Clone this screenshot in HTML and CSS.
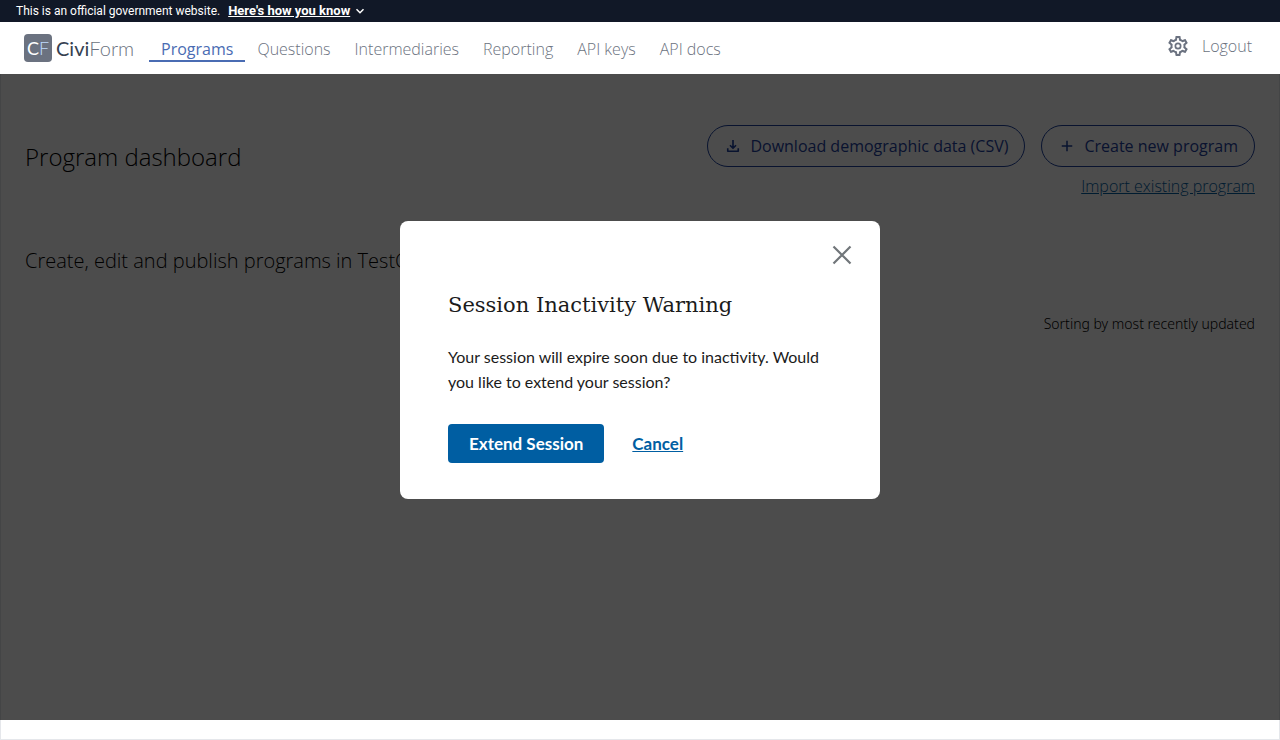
FILE: index.html
```html
<!DOCTYPE html>
<html lang="en">
<head>
<meta charset="utf-8">
<meta name="viewport" content="width=device-width, initial-scale=1">
<title>Program dashboard</title>
<link rel="stylesheet" href="styles.css">
</head>
<body>
<div class="gov-banner">
  <span>This is an official government website.</span>
  <button type="button" class="gov-toggle"><span class="gov-toggle-text">Here's how you know</span><svg class="chevron" viewBox="0 0 10 10" aria-hidden="true"><path d="M1.500 3.200 5 6.700 8.500 3.200" fill="none" stroke="currentColor" stroke-width="1.500"/></svg></button>
</div>
<header class="header">
  <a class="brand" href="#"><span class="brand-mark">C<span class="brand-mark-f">F</span></span><span class="brand-name">Civi<span class="brand-thin">Form</span></span></a>
  <nav class="nav">
    <a class="nav-link nav-link-active" href="#">Programs</a>
    <a class="nav-link" href="#">Questions</a>
    <a class="nav-link" href="#">Intermediaries</a>
    <a class="nav-link" href="#">Reporting</a>
    <a class="nav-link" href="#">API keys</a>
    <a class="nav-link" href="#">API docs</a>
  </nav>
  <div class="account">
    <a class="settings" href="#" aria-label="Settings"><svg class="gear" viewBox="0 0 24 24" aria-hidden="true"><path fill="currentColor" d="M19.43 12.98c.04-.32.07-.64.07-.98s-.03-.66-.07-.98l2.11-1.65c.19-.15.24-.42.12-.64l-2-3.46c-.09-.16-.26-.25-.44-.25-.06 0-.12.01-.17.03l-2.49 1c-.52-.4-1.08-.73-1.69-.98l-.38-2.65C14.46 2.18 14.25 2 14 2h-4c-.25 0-.46.18-.49.42l-.38 2.65c-.61.25-1.17.59-1.69.98l-2.49-1c-.06-.02-.12-.03-.18-.03-.17 0-.34.09-.43.25l-2 3.46c-.13.22-.07.49.12.64l2.11 1.65c-.04.32-.07.65-.07.98s.03.66.07.98l-2.11 1.65c-.19.15-.24.42-.12.64l2 3.46c.09.16.26.25.44.25.06 0 .12-.01.17-.03l2.49-1c.52.4 1.08.73 1.69.98l.38 2.65c.03.24.24.42.49.42h4c.25 0 .46-.18.49-.42l.38-2.65c.61-.25 1.17-.59 1.69-.98l2.49 1c.06.02.12.03.18.03.17 0 .34-.09.43-.25l2-3.46c.12-.22.07-.49-.12-.64l-2.11-1.65zm-1.98-1.71c.04.31.05.52.05.73 0 .21-.02.43-.05.73l-.14 1.13.89.7 1.08.84-.7 1.21-1.27-.51-1.04-.42-.9.68c-.43.32-.84.56-1.25.73l-1.06.43-.16 1.13-.2 1.35h-1.4l-.19-1.35-.16-1.13-1.06-.43c-.43-.18-.83-.41-1.23-.71l-.91-.7-1.06.43-1.27.51-.7-1.21 1.08-.84.89-.7-.14-1.13c-.03-.31-.05-.54-.05-.74s.02-.43.05-.73l.14-1.13-.89-.7-1.08-.84.7-1.21 1.27.51 1.04.42.9-.68c.43-.32.84-.56 1.25-.73l1.06-.43.16-1.13.2-1.35h1.39l.19 1.35.16 1.13 1.06.43c.43.18.83.41 1.23.71l.91.7 1.06-.43 1.27-.51.7 1.21-1.07.85-.89.7.14 1.13zM12 8.500a3.500 3.500 0 1 0 0 7 3.500 3.500 0 0 0 0-7zm0 5.300a1.800 1.800 0 1 1 0-3.600 1.800 1.800 0 0 1 0 3.600z"/></svg></a>
    <a class="logout" href="#">Logout</a>
  </div>
</header>
<main class="main">
  <div class="title-row">
    <h1 class="title">Program dashboard</h1>
    <div class="actions">
      <div class="action-buttons">
        <button type="button" class="pill"><svg class="pill-icon" viewBox="0 0 24 24" aria-hidden="true"><path fill="none" stroke="currentColor" stroke-width="2.200" d="M12 4v11M8 11l4 4 4-4M5 15v4h14v-4" stroke-linejoin="round"/></svg>Download demographic data (CSV)</button>
        <button type="button" class="pill"><svg class="pill-icon" viewBox="0 0 24 24" aria-hidden="true"><path fill="none" stroke="currentColor" stroke-width="2" d="M12 5v14M5 12h14"/></svg>Create new program</button>
      </div>
      <a class="import-link" href="#">Import existing program</a>
    </div>
  </div>
  <h2 class="subtitle">Create, edit and publish programs in TestCity</h2>
  <p class="sorting">Sorting by most recently updated</p>
</main>
<div class="overlay">
  <section class="modal" role="dialog" aria-modal="true" aria-labelledby="modal-title">
    <button type="button" class="close" aria-label="Close"><svg class="close-icon" viewBox="0 0 32 32" aria-hidden="true"><path fill="none" stroke="currentColor" stroke-width="2.200" d="M7.500 7.500l17 17M24.500 7.500l-17 17"/></svg></button>
    <div class="modal-content">
      <h2 class="modal-title" id="modal-title">Session Inactivity Warning</h2>
      <p class="modal-text">Your session will expire soon due to inactivity. Would you like to extend your session?</p>
      <div class="modal-actions">
        <button type="button" class="extend">Extend Session</button>
        <button type="button" class="cancel">Cancel</button>
      </div>
    </div>
  </section>
</div>
</body>
</html>
```

FILE: styles.css
```css
* { box-sizing: border-box; }

body {
  position: relative;
  display: flex;
  flex-direction: column;
  min-height: 100vh;
  margin: 0;
  background: #fff;
  color: #000;
  font-family: "Open Sans", "Noto Sans", sans-serif;
  font-size: 16px;
  font-weight: 300;
  line-height: 24px;
}

h1, h2, p { margin: 0; font-weight: inherit; }
a { color: inherit; text-decoration: none; }
button { border: 0; background: none; padding: 0; font: inherit; color: inherit; cursor: pointer; }
svg { display: block; flex: none; }

.gov-banner {
  position: relative;
  z-index: 2;
  display: flex;
  align-items: center;
  gap: 8px;
  padding: 3px 16px;
  background: #111827;
  color: #fff;
  font-family: Roboto, sans-serif;
  font-size: 12px;
  font-weight: 400;
  line-height: 16px;
}
.gov-toggle { display: flex; align-items: center; gap: 5px; font-size: 13px; font-weight: 700; line-height: 16px; }
.gov-toggle-text { text-decoration: underline; }
.chevron { width: 10px; height: 10px; }

.header {
  position: relative;
  z-index: 2;
  display: flex;
  align-items: center;
  height: 52px;
  padding: 0 28px 0 24px;
  background: #fff;
  color: #6b7280;
}
.brand { display: flex; align-items: center; gap: 4px; margin-right: 15px; font-family: Lato, sans-serif; font-size: 20px; line-height: 28px; }
.brand-mark { width: 28px; height: 28px; border-radius: 4px; background: #6b7280; color: #fff; font-size: 18px; font-weight: 400; text-align: center; }
.brand-mark-f { color: #bfdbfe; font-weight: 300; }
.brand-name { color: #374151; font-weight: 400; }
.brand-thin { color: #6b7280; font-weight: 300; }
.nav { display: flex; }
.nav-link { padding: 3px 12px 0; border-bottom: 2px solid transparent; line-height: 22px; }
.nav-link-active { border-color: #4a6cb3; color: #4a6cb3; font-weight: 400; }
.account { display: flex; align-items: center; gap: 12px; margin-left: auto; padding-bottom: 4px; }
.gear { width: 24px; height: 24px; }

.main {
  flex: 1;
  padding: 51px 24px 0;
  border: 1px solid #e5e7eb;
  border-top: 0;
}
.title-row { display: flex; justify-content: space-between; }
.title { padding-top: 16px; font-size: 24px; line-height: 32px; }
.actions { display: flex; flex-direction: column; align-items: flex-end; gap: 7px; }
.action-buttons { display: flex; gap: 16px; }
.pill {
  display: flex;
  align-items: center;
  gap: 8px;
  height: 42px;
  padding: 0 16px;
  border: 1px solid #1e429f;
  border-radius: 21px;
  color: #1e429f;
  font-weight: 500;
}
.pill-icon { width: 18px; height: 18px; }
.import-link { color: #005ea2; text-decoration: underline; }
.subtitle { margin-top: 49px; font-size: 20px; line-height: 28px; }
.sorting { margin-top: 39px; font-family: "Noto Sans", sans-serif; font-size: 14px; line-height: 20px; text-align: right; }

.overlay {
  position: absolute;
  inset: 0 0 20px;
  z-index: 1;
  display: flex;
  align-items: center;
  justify-content: center;
  background: rgba(0, 0, 0, 0.7);
}
.modal {
  display: flex;
  flex-direction: column;
  width: 480px;
  max-width: 100%;
  padding: 18px 22px 36px 48px;
  border-radius: 8px;
  background: #fff;
  color: #1b1b1b;
  font-family: Lato, sans-serif;
  font-weight: 400;
}
.close { align-self: flex-end; color: #71767a; }
.close-icon { width: 32px; height: 32px; }
.modal-content { padding: 18px 26px 0 0; }
.modal-title { font-family: "DejaVu Serif", serif; font-size: 21px; line-height: 32px; }
.modal-text { margin-top: 23px; font-size: 16px; line-height: 25px; }
.modal-actions { display: flex; align-items: center; gap: 28px; margin-top: 30px; }
.extend { height: 39px; padding: 0 21px; border-radius: 4px; background: #005ea2; color: #fff; font-size: 17px; font-weight: 700; }
.cancel { color: #005ea2; font-size: 17px; font-weight: 700; text-decoration: underline; }
```
